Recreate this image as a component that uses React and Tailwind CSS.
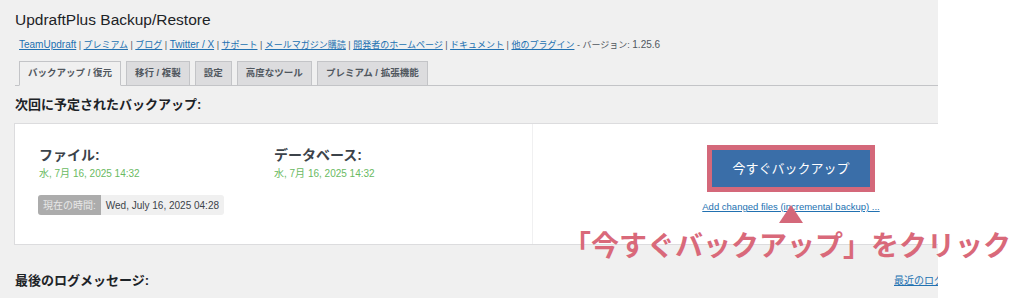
import React from "react";

const FONT = { fontFamily: '"Liberation Sans", "Noto Sans CJK JP", sans-serif' };

const links = [
  { t: "TeamUpdraft", latin: true },
  { t: "プレミアム" },
  { t: "ブログ" },
  { t: "Twitter / X", latin: true },
  { t: "サポート" },
  { t: "メールマガジン購読" },
  { t: "開発者のホームページ" },
  { t: "ドキュメント" },
  { t: "他のプラグイン" },
];

const tabs = ["バックアップ / 復元", "移行 / 複製", "設定", "高度なツール", "プレミアム / 拡張機能"];

export default function App() {
  return (
    <div className="relative flex h-[298px] w-[1024px] overflow-hidden bg-white text-[#1d2327]" style={FONT}>
      {/* ADMIN PAGE */}
      <div className="w-[938px] shrink-0 overflow-hidden bg-[#f0f0f0] pl-[15px]">
        <h1 className="mt-[10px] text-[15.5px] leading-[20px] text-[#1d2327]">UpdraftPlus Backup/Restore</h1>

        <div className="mt-[8px] pl-[4px] text-[9px] leading-[14px] text-[#50575e]">
          {links.map((l, i) => (
            <span key={l.t}>
              <a className={`text-[#2271b1] underline ${l.latin ? "text-[10px]" : ""}`}>{l.t}</a>
              {i < links.length - 1 ? " | " : ""}
            </span>
          ))}
          <span> - バージョン: <span className="text-[10px]">1.25.6</span></span>
        </div>

        {/* TABS */}
        <div className="mt-[9px] flex gap-[5px] border-b border-[#c3c4c7] pl-[4px]">
          {tabs.map((t, i) => (
            <div
              key={t}
              className={`-mb-px flex h-[25px] items-center border border-[#c3c4c7] px-[8px] text-[9.5px] font-bold text-[#50575e] ${
                i === 0 ? "border-b-[#f0f0f0] bg-[#f0f0f0] text-[#1d2327]" : "bg-[#dcdcde]"
              }`}
            >
              {t}
            </div>
          ))}
        </div>

        <h2 className="mt-[10px] text-[13px] font-bold leading-[17px] text-[#1d2327]">次回に予定されたバックアップ:</h2>

        {/* CARD */}
        <div className="ml-[-1px] mt-[10px] flex h-[122px] w-[1060px] border border-[#dcdcde] bg-white">
          <div className="w-[518px] border-r border-[#f0f0f1] pl-[24px] pt-[22px]">
            <div className="flex">
              <div className="w-[235px]">
                <div className="text-[14px] font-bold leading-[18px] text-[#3c434a]">ファイル:</div>
                <div className="mt-[3px] text-[10px] leading-[14px] text-[#6aba62]">水, 7月 16, 2025 14:32</div>
              </div>
              <div>
                <div className="text-[14px] font-bold leading-[18px] text-[#3c434a]">データベース:</div>
                <div className="mt-[3px] text-[10px] leading-[14px] text-[#6aba62]">水, 7月 16, 2025 14:32</div>
              </div>
            </div>
            <div className="ml-[-1px] mt-[14px] flex h-[20px] w-fit items-center overflow-hidden rounded-[3px] bg-[#f0f0f0] text-[10px]">
              <span className="flex h-full items-center bg-[#acacac] px-[5px] text-[#e8e8e8]">現在の時間:</span>
              <span className="px-[5px] text-[#3c434a]">Wed, July 16, 2025 04:28</span>
            </div>
          </div>
          <div className="flex w-[516px] flex-col items-center pt-[21px]">
            <div className="bg-[#d4687a] p-[5px]">
              <div className="flex h-[37px] w-[158px] items-center justify-center bg-[#3a6ea8] text-[13px] text-white">
                今すぐバックアップ
              </div>
            </div>
            <a className="mt-[9px] text-[9.5px] leading-[12px] text-[#2271b1] underline">Add changed files (incremental backup) ...</a>
          </div>
        </div>

        <div className="mt-[27px] flex items-center justify-between">
          <h2 className="text-[13px] font-bold leading-[17px] text-[#1d2327]">最後のログメッセージ:</h2>
          <a className="mr-[-20px] w-[64px] whitespace-nowrap text-[10px] text-[#2271b1] underline">最近のログ...</a>
        </div>
      </div>

      {/* ANNOTATION */}
      <svg className="absolute left-[779px] top-[205px]" width="24" height="18" viewBox="0 0 24 18">
        <polygon points="12,0 24,18 0,18" fill="#d4687a" />
      </svg>
      <div
        className="absolute left-[563px] top-[224px] whitespace-nowrap text-[28px] font-semibold leading-[40px] text-[#d9697a]"
        style={{ fontFamily: '"Noto Sans CJK JP", sans-serif' }}
      >
        「今すぐバックアップ」をクリック
      </div>
    </div>
  );
}
